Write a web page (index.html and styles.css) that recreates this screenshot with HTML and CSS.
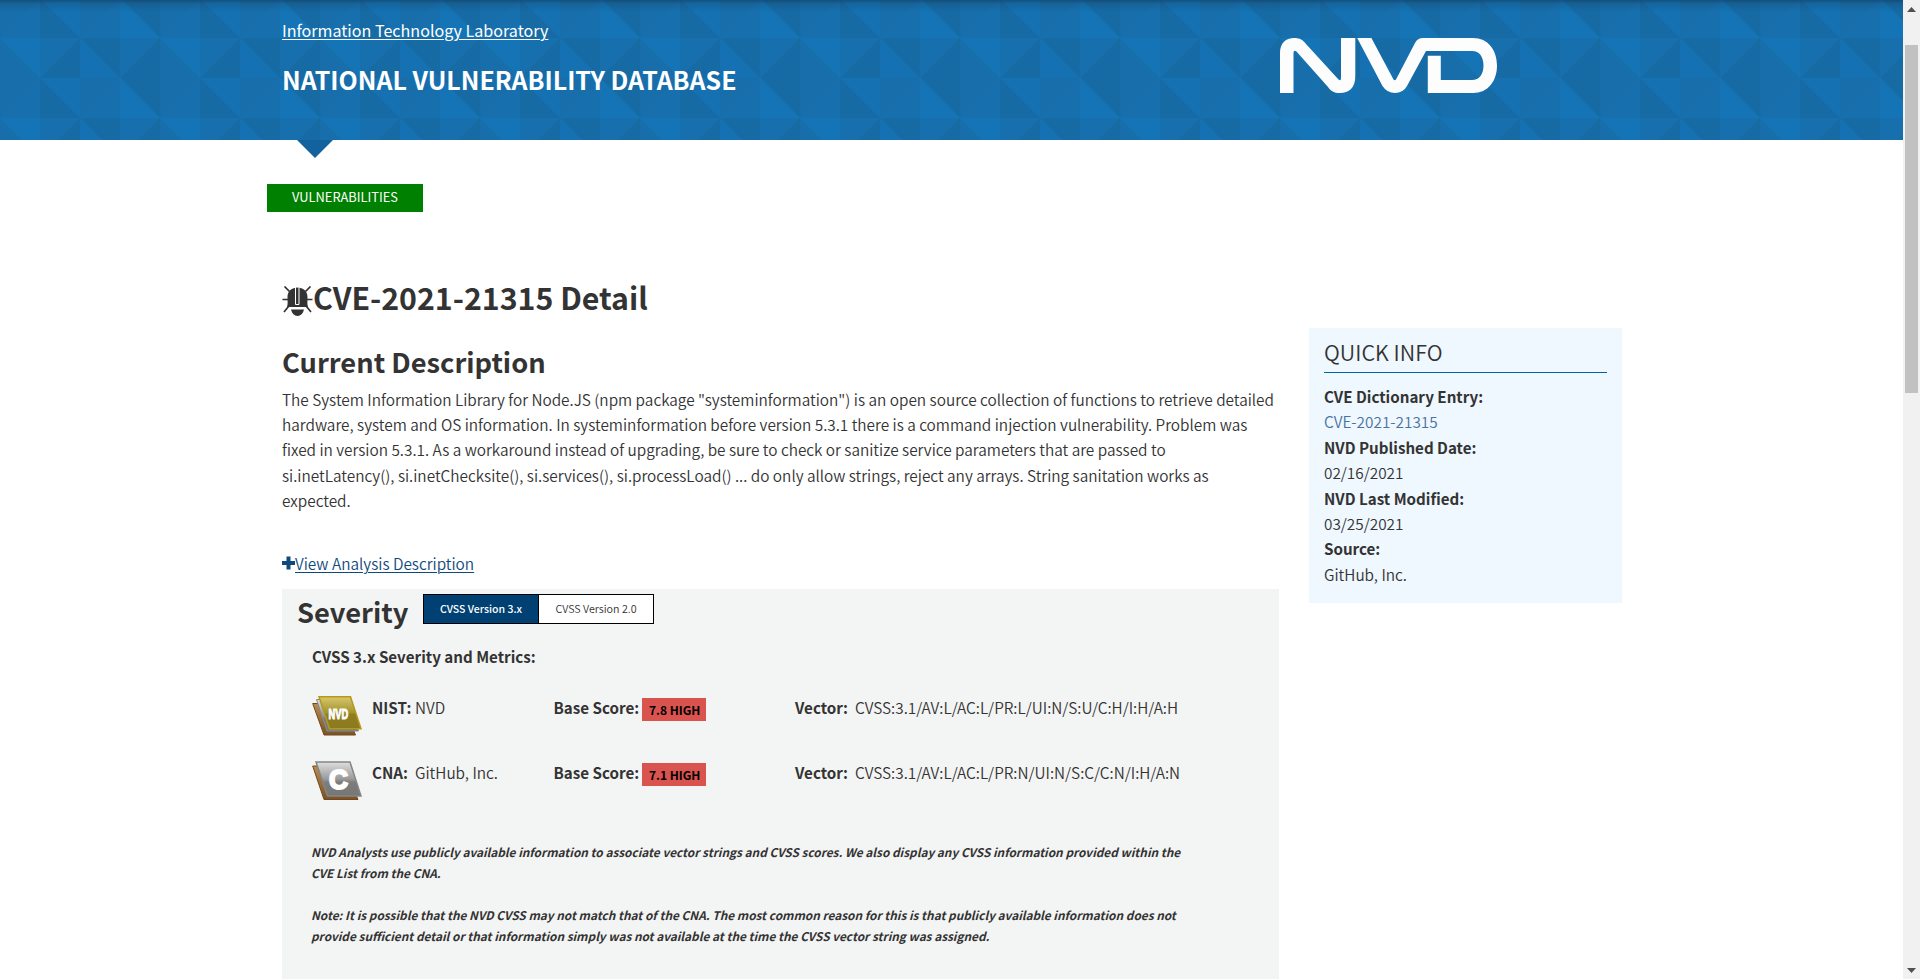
FILE: index.html
```html
<!DOCTYPE html>
<html lang="en">
<head>
<meta charset="utf-8">
<title>NVD - CVE-2021-21315</title>
<link rel="stylesheet" href="styles.css">
</head>
<body>
<div class="page">
  <header class="site-header">
    <svg class="header-bg" width="100%" height="140" aria-hidden="true">
      <defs>
        <pattern id="tri" width="160" height="80" y="-2" patternUnits="userSpaceOnUse">
          <rect width="160" height="80" fill="#176eaa"/>
          <path fill="#1770ad" d="M40 0V40H0zM120 0V40H80zM40 40H80L40 80zM120 40H160L120 80z"/>
          <path fill="#166ba5" d="M40 0V40H80zM120 0H160V40zM80 40H120V80zM80 40V80H40zM160 40V80H120z"/>
          <path fill="#1571b1" d="M40 0H80V40zM80 40V80H120z"/>
          <path fill="#1474b5" d="M120 0V40H160zM0 40H40V80z"/>
        </pattern>
        <linearGradient id="shade" x1="0" y1="0" x2="0" y2="1">
          <stop offset="0" stop-color="#123" stop-opacity=".4"/>
          <stop offset=".3" stop-color="#123" stop-opacity=".15"/>
          <stop offset="1" stop-color="#123" stop-opacity="0"/>
        </linearGradient>
      </defs>
      <rect width="100%" height="140" fill="url(#tri)"/>
      <rect width="100%" height="12" fill="url(#shade)"/>
    </svg>
    <div class="header-inner">
      <div class="brand">
        <a class="lab">Information Technology Laboratory</a>
        <div class="db-title">NATIONAL VULNERABILITY DATABASE</div>
      </div>
      <svg class="logo" width="218" height="55" viewBox="0 0 218 55" fill="#fdfdfd" role="img" aria-label="NVD">
        <path d="M0 55V15C0 5 6 0 14 0C20 0 23 2 26 6L58.500 41.500Q61 43.500 61 40V0H75.300V38C75.300 50 69 55 60 55C54 55 51 53 48 49L16.500 13.500Q13.500 11.500 13.500 15V55z"/>
        <path d="M77.200 0H91.400L113.500 41.500Q114.700 43 116 41.500L135 5Q137.500 0 143 0H193C208 0 217 12 217 27.500S208 55 193 55H147.800V17.700H160.800V42H192C199.500 42 203.500 36 203.500 27.500S199.500 13 192 13H146L127 48Q123 55 115 55T102.500 48z"/>
      </svg>
    </div>
    <div class="pointer"></div>
  </header>

  <nav class="crumb"><span class="crumb-tag">VULNERABILITIES</span></nav>

  <div class="content">
    <main>
      <h1>
        <svg width="31" height="31" viewBox="0 0 31 31">
          <path fill="#333" d="M5 21C6 18 5.500 15 5.500 11C5.500 5 10 1.500 15.500 1.500S25.500 5 25.500 11C25.500 15 25 18 26 21zM9 23.500H22Q20.500 30 15.500 30T9 23.500z"/>
          <path fill="none" stroke="#333" stroke-width="1.700" d="M2.500 .5L7.500 5.500M28.500 .5L23.500 5.500M.5 13.500H6M25 13.500H30.500M2 26L6.500 20.500M29 26L24.500 20.500"/>
          <path fill="none" stroke="#fff" stroke-width="1" d="M13.500 1V18.500H17V1"/>
        </svg><span>CVE-2021-21315 Detail</span>
      </h1>
      <h2 class="desc-title">Current Description</h2>
      <p class="desc">The System Information Library for Node.JS (npm package "systeminformation") is an open source collection of functions to retrieve detailed<br>hardware, system and OS information. In systeminformation before version 5.3.1 there is a command injection vulnerability. Problem was<br>fixed in version 5.3.1. As a workaround instead of upgrading, be sure to check or sanitize service parameters that are passed to<br>si.inetLatency(), si.inetChecksite(), si.services(), si.processLoad() ... do only allow strings, reject any arrays. String sanitation works as<br>expected.</p>
      <div class="analysis">
        <svg width="13" height="14" viewBox="0 0 13 14"><path fill="#0f4a7c" d="M4.500 .5h4v4.500h4.500v4h-4.500v4.500h-4v-4.500h-4.500v-4h4.500z"/></svg><a>View Analysis Description</a>
      </div>

      <section class="severity">
        <div class="sev-head">
          <h2>Severity</h2>
          <div class="toggle"><span class="on">CVSS Version 3.x</span><span>CVSS Version 2.0</span></div>
        </div>
        <div class="sev-body">
          <div class="metrics-title">CVSS 3.x Severity and Metrics:</div>
          <div class="score-row">
            <svg width="51" height="42" viewBox="0 0 51 42">
              <defs>
                <linearGradient id="gold" x1="0" y1="0" x2="0" y2="1"><stop offset="0" stop-color="#d9c86c"/><stop offset=".5" stop-color="#a3922f"/><stop offset=".55" stop-color="#8f7d1f"/><stop offset="1" stop-color="#8c7a20"/></linearGradient>
                <linearGradient id="silver" x1="0" y1="0" x2="0" y2="1"><stop offset="0" stop-color="#dedede"/><stop offset=".5" stop-color="#9a9a9a"/><stop offset=".6" stop-color="#7c7c7c"/><stop offset="1" stop-color="#777"/></linearGradient>
                <linearGradient id="bronze" x1="0" y1="0" x2="0" y2="1"><stop offset="0" stop-color="#b98b50"/><stop offset="1" stop-color="#75552a"/></linearGradient>
              </defs>
              <path fill="url(#bronze)" stroke="#7a4413" d="M.7 8.500H30L43.500 40H12z"/>
              <path fill="url(#silver)" stroke="#8a8a8a" d="M4.500 4.500H34L46.500 36H15z"/>
              <path fill="url(#gold)" stroke="#b29a1c" stroke-width="1.500" d="M7 1.700H38.500L49 33.700H17.500z"/>
              <text class="stamp" transform="translate(16.500 24) scale(.62 1)">NVD</text>
            </svg>
            <div><b class="who">NIST:</b>NVD</div>
            <div><b>Base Score:</b><span class="badge">7.8 HIGH</span></div>
            <div><b class="vec">Vector:</b>CVSS:3.1/AV:L/AC:L/PR:L/UI:N/S:U/C:H/I:H/A:H</div>
          </div>
          <div class="score-row">
            <svg width="51" height="42" viewBox="0 0 51 42">
              <path fill="url(#bronze)" stroke="#7a4413" d="M.7 6H30L46 39.500H12z"/>
              <path fill="url(#silver)" stroke="#858585" stroke-width="1.500" d="M4 2H38L49 36H15.500z"/>
              <text class="stamp-c" x="17" y="28.500" textLength="19" lengthAdjust="spacingAndGlyphs">C</text>
            </svg>
            <div><b class="who">CNA:</b>GitHub, Inc.</div>
            <div><b>Base Score:</b><span class="badge">7.1 HIGH</span></div>
            <div><b class="vec">Vector:</b>CVSS:3.1/AV:L/AC:L/PR:N/UI:N/S:C/C:N/I:H/A:N</div>
          </div>
          <p class="note">NVD Analysts use publicly available information to associate vector strings and CVSS scores. We also display any CVSS information provided within the<br>CVE List from the CNA.</p>
          <p class="note">Note: It is possible that the NVD CVSS may not match that of the CNA. The most common reason for this is that publicly available information does not<br>provide sufficient detail or that information simply was not available at the time the CVSS vector string was assigned.</p>
        </div>
      </section>
    </main>

    <aside class="quick">
      <h3>QUICK INFO</h3>
      <dl>
        <dt>CVE Dictionary Entry:</dt><dd><a>CVE-2021-21315</a></dd>
        <dt>NVD Published Date:</dt><dd>02/16/2021</dd>
        <dt>NVD Last Modified:</dt><dd>03/25/2021</dd>
        <dt>Source:</dt><dd>GitHub, Inc.</dd>
      </dl>
    </aside>
  </div>
</div>
<div class="scrollbar">
  <svg width="9" height="5"><path fill="#505050" d="M0 5L4.500 0L9 5z"/></svg>
  <div class="thumb"></div>
  <svg width="9" height="5"><path fill="#505050" d="M0 0L4.500 5L9 0z"/></svg>
</div>
</body>
</html>
```
FILE: styles.css
```css
* { box-sizing: border-box; }
body {
  margin: 0;
  height: 979px;
  overflow: hidden;
  display: flex;
  background: #fff;
  color: #333;
  font: 350 15.35px/25.4px "Noto Sans CJK SC", sans-serif;
}
svg { display: block; flex: none; }
h1, h2, h3, p, dl, dd { margin: 0; }
.page { width: 1903px; height: 979px; overflow: hidden; }

.site-header { position: relative; height: 140px; font-weight: 400; }
.header-bg { position: absolute; inset: 0; }
.header-inner {
  position: relative;
  display: flex;
  justify-content: space-between;
  width: 1216px;
  margin-left: 282px;
  padding-top: 18px;
  color: #fff;
}
.lab {
  display: block;
  font-size: 16.1px;
  line-height: 24px;
  text-decoration: underline;
  text-underline-offset: 2px;
  text-decoration-thickness: 1px;
}
.db-title { margin-top: 20px; font-size: 24.95px; line-height: 34px; font-weight: 700; }
.logo { margin-top: 20px; }
.pointer {
  position: absolute;
  left: 297px;
  top: 140px;
  border: 18px solid transparent;
  border-top-color: #12639d;
  border-bottom: 0;
}

.crumb { display: flex; padding: 44px 0 0 267px; font-weight: 400; }
.crumb-tag {
  width: 156px;
  height: 28px;
  background: #008000;
  color: #fff;
  font-size: 12.85px;
  line-height: 25px;
  text-align: center;
}

.content {
  display: grid;
  grid-template-columns: 997px 313px;
  column-gap: 30px;
  align-items: start;
  padding: 65px 0 0 282px;
}
h1 { display: flex; font-size: 30.3px; line-height: 40px; }
h1 svg { margin-top: 9px; }
h2 { font-size: 27.25px; line-height: 36px; }
.desc-title { margin-top: 26px; }
.desc { margin-top: 8px; line-height: 25.2px; white-space: nowrap; }
.analysis { display: flex; margin-top: 38px; color: #0f4a7c; }
.analysis svg { margin-top: 5px; }
.analysis a { text-decoration: underline; text-underline-offset: 2px; text-decoration-thickness: 1px; }

.severity { margin-top: 13px; height: 392px; background: #f3f5f4; }
.sev-head { display: flex; gap: 15px; padding: 4px 0 0 15px; }
.sev-head h2 { width: 111px; height: 37px; }
.toggle {
  display: flex;
  height: 30px;
  margin-top: 1px;
  border: 1px solid #000;
  background: #fff;
  font-size: 10.7px;
  line-height: 28px;
  text-align: center;
}
.toggle span { width: 114px; }
.toggle .on { width: 115px; background: #004072; color: #fff; font-size: 10.5px; font-weight: 500; border-right: 1px solid #000; }
.sev-body { padding: 14px 0 0 30px; }
.metrics-title { font-size: 15.16px; font-weight: 700; margin-bottom: 25px; }
.score-row {
  display: grid;
  grid-template-columns: 60px 181.5px 241.5px 1fr;
  height: 65px;
  white-space: nowrap;
}
b, dt { font-size: 15.16px; font-weight: 700; }
.who { display: inline-block; width: 43px; }
.vec { display: inline-block; width: 60px; }
.badge {
  display: inline-block;
  width: 64px;
  height: 23px;
  margin: -6px 0 0 3px;
  padding-left: 1px;
  background: #d9534f;
  color: #000;
  font-size: 12px;
  font-weight: 700;
  line-height: 23px;
  text-align: center;
  vertical-align: -1px;
}
.note {
  margin: 16px 0 21px -1px;
  font-size: 11.83px;
  line-height: 21px;
  font-weight: 700;
  font-style: italic;
  white-space: nowrap;
}
.note + .note { margin-top: 0; }
.stamp { font: 700 15px "Liberation Sans", sans-serif; fill: #fff; stroke: #fff; stroke-width: 1px; }
.stamp-c { font: 700 27px "Liberation Sans", sans-serif; fill: #fff; stroke: #fff; stroke-width: 2px; }

.quick { margin-top: 51px; height: 275px; padding: 9px 15px 0; background: #eff7ff; }
h3 {
  height: 36px;
  border-bottom: 1px solid #00659b;
  font-size: 21.5px;
  line-height: 30px;
  font-weight: 350;
}
dl { margin-top: 11px; }
.quick a { color: #4873a0; }

.scrollbar {
  display: flex;
  flex-direction: column;
  align-items: center;
  width: 17px;
  height: 979px;
  padding: 7px 0 6px;
  background: #f1f1f1;
}
.thumb { width: 13px; height: 348px; margin: 33px 0 auto; background: #c1c1c1; }
```
